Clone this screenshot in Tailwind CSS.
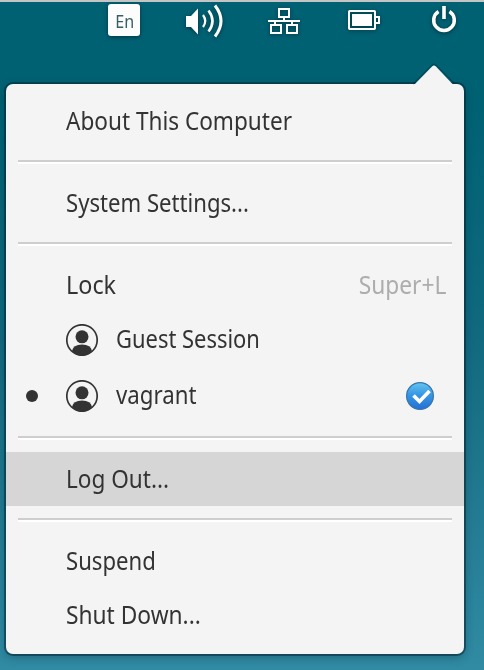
<!DOCTYPE html>
<html lang="en">
<head>
<meta charset="utf-8">
<title>Session menu</title>
<script src="https://cdn.jsdelivr.net/npm/@tailwindcss/browser@4"></script>
</head>
<body class="w-[484px] h-[670px] overflow-hidden bg-linear-to-b from-[#006173] from-15% via-[#10697f] via-50% to-[#308ba3] font-['Noto_Sans','Open_Sans',sans-serif] text-[25px] text-[#333]">
<header class="h-[84px] border-t-2 border-[#c5c5c5] relative">
  <div class="flex items-start pl-[108px] drop-shadow-[0_1px_2px_rgba(0,0,0,0.45)]">
    <div class="mt-[2px] w-8 h-8 rounded-[3px] bg-[#fcfcfc] flex items-center justify-center text-[18.500px] leading-none text-[#355f68]"><span class="pt-[2px] pl-px scale-x-[.87]">En</span></div>
    <svg class="ml-[44px] w-10 h-10" viewBox="184 2 40 40" fill="none" stroke="#fff">
      <path d="M186 16h5l7-7.500v26l-7-7.500h-5z" fill="#fff" stroke="none"/>
      <path d="M203 15q4.500 6 0 12" stroke-width="2.200"/>
      <path d="M208.500 10.500q8 10.500 0 21" stroke-width="2.600"/>
      <path d="M215 5.500q12 15.500 0 31" stroke-width="3"/>
    </svg>
    <svg class="ml-[40px] w-10 h-10" viewBox="264 2 40 40" fill="none" stroke="#fff" stroke-width="2">
      <path d="M279 9h10v8h-10zM271 25h10v8h-10zM287 25h10v8h-10zM268 21h32M284 17v4M275 21v4M292 21v4"/>
    </svg>
    <svg class="ml-[40px] w-10 h-10" viewBox="344 2 40 40" fill="none" stroke="#fff" stroke-width="2">
      <rect x="349" y="11" width="26" height="18" rx=".7"/>
      <path d="M352 14h20v12h-20z" fill="#fff" stroke="none"/>
      <path d="M376 17h3v6h-3"/>
    </svg>
    <svg class="ml-[40px] w-10 h-10" viewBox="424 2 40 40" fill="none" stroke="#fff" stroke-width="3.500">
      <path d="M438.500 11.500A10.300 10.300 0 1 0 449.500 11.500"/>
      <path d="M444 6v13" stroke-width="3.600"/>
    </svg>
  </div>
  <svg class="absolute left-[408px] top-[58px] w-[52px] h-[26px] z-10" viewBox="408 60 52 26">
    <path d="M413 84l19.300-19q1.700-1.700 3.400 0L454 83" fill="none" stroke="#00232f" stroke-opacity=".35" stroke-width="1.500"/>
    <path d="M414 86v-1l18.300-18.700q1.700-1.700 3.400 0L452 83.500l2 1.500v1z" fill="#f4f4f4"/>
  </svg>
</header>
<main class="ml-[6px] w-[458px] h-[570px] rounded-[7px] bg-[#f4f4f4] pt-[10px] pb-3 flex flex-col shadow-[0_0_0_2px_rgba(0,35,48,0.5),0_3px_10px_rgba(0,30,45,0.35)]">
  <div class="h-[54px] pl-[60px] flex items-center"><span class="whitespace-nowrap origin-left scale-x-[.903]">About This Computer</span></div>
  <div class="mx-3 my-3 h-1 border-t-2 border-[#cecece] bg-white"></div>
  <div class="h-[54px] pl-[60px] flex items-center"><span class="whitespace-nowrap origin-left scale-x-[.885]">System Settings...</span></div>
  <div class="mx-3 my-3 h-1 border-t-2 border-[#cecece] bg-white"></div>
  <div class="h-[54px] pl-[60px] pr-[18px] flex items-center justify-between"><span class="origin-left scale-x-[.935]">Lock</span><span class="origin-right scale-x-[.91] text-[#adadad]">Super+L</span></div>
  <div class="h-[56px] pl-[60px] flex items-center">
    <svg class="w-8 h-8 mr-[18px]" viewBox="0 0 32 32"><circle cx="16" cy="16" r="15.200" fill="none" stroke="#333" stroke-width="1.700"/><circle cx="16" cy="12.800" r="6.500" fill="#333"/><path d="M6 27Q7 20.500 16 20.500T26 27Q22 31.800 16 31.800T6 27z" fill="#333"/></svg>
    <span class="whitespace-nowrap pb-[2px] origin-left scale-x-[.877]">Guest Session</span>
  </div>
  <div class="h-[56px] pl-5 pr-[30px] flex items-center">
    <span class="w-3 h-3 rounded-full bg-[#333] mr-7"></span>
    <svg class="w-8 h-8 mr-[18px]" viewBox="0 0 32 32"><circle cx="16" cy="16" r="15.200" fill="none" stroke="#333" stroke-width="1.700"/><circle cx="16" cy="12.800" r="6.500" fill="#333"/><path d="M6 27Q7 20.500 16 20.500T26 27Q22 31.800 16 31.800T6 27z" fill="#333"/></svg>
    <span class="pb-[2px] origin-left scale-x-[.89]">vagrant</span>
    <svg class="w-7 h-7 ml-auto" viewBox="0 0 28 28"><defs><linearGradient id="blue" x2="0" y2="1"><stop stop-color="#62c5f0"/><stop offset=".45" stop-color="#3797e3"/><stop offset="1" stop-color="#256fd4"/></linearGradient></defs><circle cx="14" cy="14" r="13.400" fill="url(#blue)" stroke="#3876ad" stroke-width="1.200"/><path d="M7.500 13.500l6 6L23.500 9" fill="none" stroke="#fff" stroke-width="3.600"/></svg>
  </div>
  <div class="mx-3 my-3 h-1 border-t-2 border-[#cecece] bg-white"></div>
  <div class="h-[54px] pl-[60px] flex items-center bg-[#d6d6d6]"><span class="whitespace-nowrap origin-left scale-x-[.903]">Log Out...</span></div>
  <div class="mx-3 my-3 h-1 border-t-2 border-[#cecece] bg-white"></div>
  <div class="h-[54px] pl-[60px] flex items-center"><span class="origin-left scale-x-[.885]">Suspend</span></div>
  <div class="h-[54px] pl-[60px] flex items-center"><span class="whitespace-nowrap origin-left scale-x-[.91]">Shut Down...</span></div>
</main>
</body>
</html>
